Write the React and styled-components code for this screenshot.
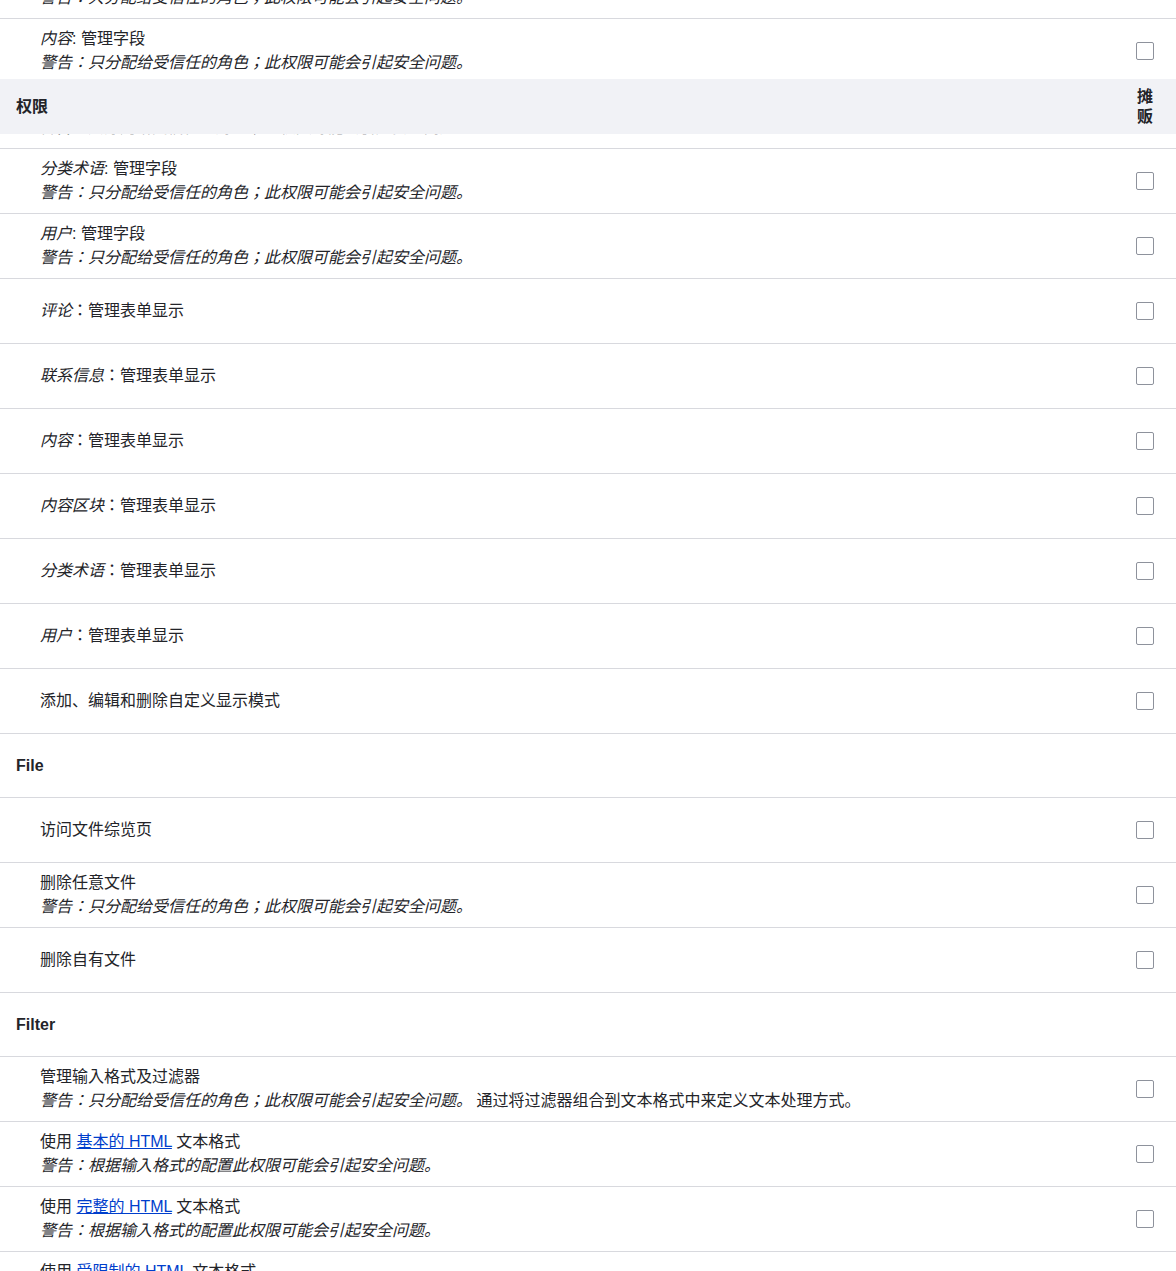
import React from "react";
import styled, { createGlobalStyle } from "styled-components";

const Global = createGlobalStyle`
  html, body {
    margin: 0;
    padding: 0;
    background: #fff;
  }
  body {
    font-family: "Liberation Sans", "Noto Sans CJK JP", sans-serif;
    font-size: 16px;
    line-height: 24px;
    color: #232429;
    overflow: hidden;
  }
`;

const Page = styled.div`
  position: relative;
  height: 1271px;
  overflow: hidden;
`;

const Table = styled.div`
  display: flex;
  flex-direction: column;
  margin-top: -46px;
`;

const Row = styled.div`
  display: flex;
  align-items: center;
  box-sizing: border-box;
  min-height: ${(p) => (p.$heading ? "64px" : "65px")};
  border-bottom: 1px solid #d8d9de;
`;

const Label = styled.div`
  flex: 1;
  padding: 8px 0 8px ${(p) => (p.$heading ? "16px" : "40px")};
  font-weight: ${(p) => (p.$heading ? 700 : 400)};
`;

const Warning = styled.em`
  font-style: italic;
`;

const Entity = styled.em`
  font-style: italic;
`;

const FormatLink = styled.a`
  color: #003ecc;
  text-decoration: underline;
`;

const CheckCell = styled.div`
  flex-shrink: 0;
  width: 18px;
  padding: 0 22px 0 0;
  display: flex;
  justify-content: center;
`;

const Checkbox = styled.span`
  display: block;
  width: 16px;
  height: 16px;
  border: 1px solid #8e929c;
  border-radius: 2px;
  background: #fff;
`;

const StickyHead = styled.div`
  position: absolute;
  top: 79px;
  left: 0;
  right: 0;
  height: 55px;
  box-sizing: border-box;
  display: flex;
  align-items: center;
  background: #f1f2f6;
  font-weight: 700;
  line-height: 20px;
`;

const HeadTitle = styled.div`
  flex: 1;
  padding-left: 16px;
`;

const HeadRole = styled.div`
  flex-shrink: 0;
  width: 18px;
  margin-right: 22px;
  text-align: center;
`;

const WARN = "警告：只分配给受信任的角色；此权限可能会引起安全问题。";
const WARN_FORMAT = "警告：根据输入格式的配置此权限可能会引起安全问题。";

const rows = [
  { entity: "联系信息", text: ": 管理字段", warn: WARN },
  { entity: "内容", text: ": 管理字段", warn: WARN },
  { entity: "内容区块", text: ": 管理字段", warn: WARN },
  { entity: "分类术语", text: ": 管理字段", warn: WARN },
  { entity: "用户", text: ": 管理字段", warn: WARN },
  { entity: "评论", text: "：管理表单显示" },
  { entity: "联系信息", text: "：管理表单显示" },
  { entity: "内容", text: "：管理表单显示" },
  { entity: "内容区块", text: "：管理表单显示" },
  { entity: "分类术语", text: "：管理表单显示" },
  { entity: "用户", text: "：管理表单显示" },
  { text: "添加、编辑和删除自定义显示模式" },
  { heading: "File" },
  { text: "访问文件综览页" },
  { text: "删除任意文件", warn: WARN },
  { text: "删除自有文件" },
  { heading: "Filter" },
  { text: "管理输入格式及过滤器", warn: WARN, extra: " 通过将过滤器组合到文本格式中来定义文本处理方式。" },
  { format: "基本的 HTML", warn: WARN_FORMAT },
  { format: "完整的 HTML", warn: WARN_FORMAT },
  { format: "受限制的 HTML", warn: WARN_FORMAT },
];

function PermissionRow({ row }) {
  if (row.heading) {
    return (
      <Row $heading>
        <Label $heading>{row.heading}</Label>
      </Row>
    );
  }
  return (
    <Row>
      <Label>
        <div>
          {row.entity && <Entity>{row.entity}</Entity>}
          {row.format ? (
            <>
              使用 <FormatLink href="#">{row.format}</FormatLink> 文本格式
            </>
          ) : (
            row.text
          )}
        </div>
        {row.warn && (
          <div>
            <Warning>{row.warn}</Warning>
            {row.extra}
          </div>
        )}
      </Label>
      <CheckCell>
        <Checkbox />
      </CheckCell>
    </Row>
  );
}

export default function App() {
  return (
    <Page>
      <Global />
      <Table>
        {rows.map((row, i) => (
          <PermissionRow key={i} row={row} />
        ))}
      </Table>
      <StickyHead>
        <HeadTitle>权限</HeadTitle>
        <HeadRole>摊贩</HeadRole>
      </StickyHead>
    </Page>
  );
}
